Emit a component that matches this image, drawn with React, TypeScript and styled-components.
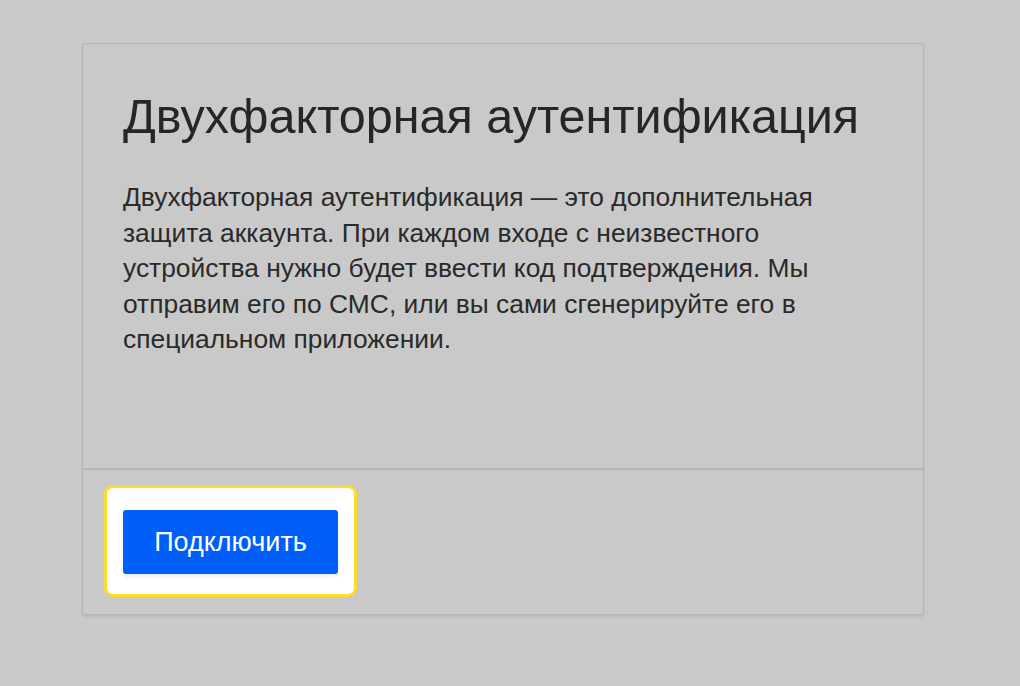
import React, { FC } from 'react'
import styled, { createGlobalStyle } from 'styled-components'

const GlobalStyle = createGlobalStyle`
  html, body {
    margin: 0;
    padding: 0;
    background: #c9c9c9;
  }
  body {
    font-family: "Liberation Sans", Arial, sans-serif;
    color: #262626;
  }
`

const Page = styled.div`
  padding: 43px 0 0 82px;
  min-height: 686px;
  box-sizing: border-box;
`

const Card = styled.section`
  width: 842px;
  box-sizing: border-box;
  border: 1px solid #b4b4b4;
  border-radius: 3px;
  box-shadow: 0 2px 3px rgba(0, 0, 0, 0.08);
`

const Body = styled.div`
  height: 426px;
  box-sizing: border-box;
  padding: 44px 40px 0;
  border-bottom: 2px solid #b6b6b6;
`

const Title = styled.h1`
  margin: 0;
  font-size: 48.5px;
  line-height: 56px;
  font-weight: normal;
  color: #262626;
`

const Text = styled.p`
  margin: 36px 0 0;
  width: 710px;
  font-size: 26.4px;
  line-height: 35.5px;
  color: #2a2a2a;
`

const Footer = styled.div`
  padding: 40px;
  display: flex;
`

const Spotlight = styled.div`
  position: relative;
  display: inline-flex;
  &::before {
    content: '';
    position: absolute;
    left: -19px;
    top: -25px;
    right: -19px;
    bottom: -23px;
    background: #fff;
    border: 3px solid #ffdb2e;
    border-radius: 9px;
  }
`

const Button = styled.button`
  position: relative;
  width: 215px;
  height: 64px;
  padding: 0;
  border: 0;
  border-radius: 3px;
  background: #005ff9;
  color: #fff;
  font-family: "Liberation Sans", Arial, sans-serif;
  font-size: 27px;
  cursor: pointer;
  box-shadow: 0 3px 3px rgba(0, 0, 40, 0.06);
`

const App: FC = () => (
  <>
    <GlobalStyle />
    <Page>
      <Card>
        <Body>
          <Title>Двухфакторная аутентификация</Title>
          <Text>
            Двухфакторная аутентификация — это дополнительная защита аккаунта.
            При каждом входе с неизвестного устройства нужно будет ввести код
            подтверждения. Мы отправим его по СМС, или вы сами сгенерируйте его
            в специальном приложении.
          </Text>
        </Body>
        <Footer>
          <Spotlight>
            <Button>Подключить</Button>
          </Spotlight>
        </Footer>
      </Card>
    </Page>
  </>
)

export default App
